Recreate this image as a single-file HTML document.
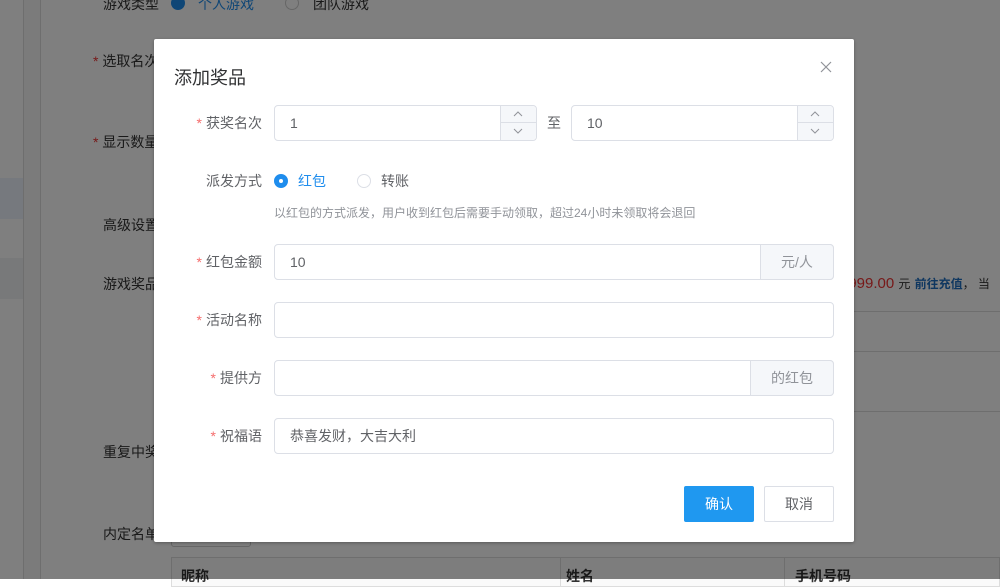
<!DOCTYPE html>
<html><head><meta charset="utf-8"><style>
*{box-sizing:border-box;margin:0;padding:0}
body{width:1000px;height:579px;overflow:hidden;position:relative;background:#fff;font-family:"Liberation Sans","Noto Sans CJK SC",sans-serif;font-size:14px;color:#606266}
.a{position:absolute;white-space:nowrap}
.ov{position:absolute;left:0;top:0;width:1000px;height:579px;background:rgba(0,0,0,.5)}
.m{position:absolute;left:154px;top:39px;width:700px;height:503px;background:#fff;border-radius:2px;box-shadow:0 1px 3px rgba(0,0,0,.3)}
.lb{position:absolute;right:592px;width:120px;text-align:right;font-size:14px;color:#606266;line-height:20px}
.lb i{color:#f56c6c;font-style:normal;margin-right:4px}
.in{position:absolute;border:1px solid #dcdfe6;border-radius:4px;height:36px;background:#fff;line-height:34px;padding-left:15px;color:#606266}
.ap{position:absolute;top:-1px;right:-1px;height:36px;background:#f5f7fa;border:1px solid #dcdfe6;border-radius:0 4px 4px 0;color:#909399;text-align:center;line-height:34px}
.ctl{position:absolute;right:0;top:0;width:36px;height:34px;background:#f5f7fa;border-left:1px solid #dcdfe6;border-radius:0 4px 4px 0}
.ctl div{height:17px;position:relative}
.ctl div:first-child{border-bottom:1px solid #dcdfe6}
.ctl svg{position:absolute;left:12px;top:5px}
.rd{position:absolute;width:14px;height:14px;border-radius:50%;border:1px solid #dcdfe6;background:#fff}
</style></head><body>
<div class="a" style="left:0;top:0;width:24px;height:579px;background:#fff;border-right:1px solid #ddd"></div>
<div class="a" style="left:0;top:178px;width:23px;height:41px;background:#ecf3fd"></div>
<div class="a" style="left:0;top:258px;width:23px;height:41px;background:#f0f2f5"></div>
<div class="a" style="left:24px;top:0;width:17px;height:579px;background:#f7f7f7;border-right:1px solid #ddd"></div>
<div class="a" style="left:103px;top:-6px;color:#333">游戏类型</div>
<div class="a" style="left:171px;top:-4px;width:14px;height:14px;border-radius:50%;background:#1f8ded"></div>
<div class="a" style="left:198px;top:-6px;color:#1f8ded">个人游戏</div>
<div class="a" style="left:285px;top:-4px;width:14px;height:14px;border-radius:50%;border:1px solid #ccc"></div>
<div class="a" style="left:313px;top:-6px;color:#333">团队游戏</div>
<div class="a" style="left:93px;top:51px;color:#333"><span style="color:#e33">*</span> 选取名次</div>
<div class="a" style="left:93px;top:132px;color:#333"><span style="color:#e33">*</span> 显示数量</div>
<div class="a" style="left:103px;top:215px;color:#333">高级设置</div>
<div class="a" style="left:103px;top:274px;color:#333">游戏奖品</div>
<div class="a" style="left:103px;top:442px;color:#333">重复中奖</div>
<div class="a" style="left:103px;top:524px;color:#333">内定名单</div>
<div class="a" style="left:840px;top:275px;font-size:15px;color:#e33">9999.00 <span style="font-size:12px;color:#333">元</span> <span style="font-size:12px;color:#1f6fc0;font-weight:bold">前往充值</span><span style="font-size:12px;color:#333">， 当</span></div>
<div class="a" style="left:854px;top:311px;width:146px;border-top:1px solid #ddd"></div>
<div class="a" style="left:854px;top:351px;width:146px;border-top:1px solid #ddd"></div>
<div class="a" style="left:854px;top:411px;width:146px;border-top:1px solid #ddd"></div>
<div class="a" style="left:171px;top:520px;width:80px;height:27px;border:1px solid #ccc;border-radius:3px"></div>
<div class="a" style="left:171px;top:557px;width:829px;height:30px;border:1px solid #ddd;background:#fafafa"></div>
<div class="a" style="left:784px;top:557px;height:30px;border-left:1px solid #ddd"></div>
<div class="a" style="left:560px;top:557px;height:30px;border-left:1px solid #ddd"></div>
<div class="a" style="left:181px;top:566px;color:#333;font-weight:bold">昵称</div>
<div class="a" style="left:566px;top:566px;color:#333;font-weight:bold">姓名</div>
<div class="a" style="left:795px;top:566px;color:#333;font-weight:bold">手机号码</div>
<div class="ov"></div>
<div class="m">
<div class="a" style="left:20px;top:25px;font-size:18px;color:#303133">添加奖品</div>
<svg class="a" style="left:666px;top:22px" width="12" height="12" viewBox="0 0 12 12"><path d="M1 1L11 11M11 1L1 11" stroke="#909399" stroke-width="1.2"/></svg>
<div class="lb" style="top:74px"><i>*</i>获奖名次</div>
<div class="in" style="left:120px;top:66px;width:263px">1<div class="ctl"><div><svg width="10" height="6"><path d="M1 5L5 1L9 5" fill="none" stroke="#909399"/></svg></div><div><svg width="10" height="6"><path d="M1 1L5 5L9 1" fill="none" stroke="#909399"/></svg></div></div></div>
<div class="a" style="left:393px;top:74px;color:#606266">至</div>
<div class="in" style="left:417px;top:66px;width:263px">10<div class="ctl"><div><svg width="10" height="6"><path d="M1 5L5 1L9 5" fill="none" stroke="#909399"/></svg></div><div><svg width="10" height="6"><path d="M1 1L5 5L9 1" fill="none" stroke="#909399"/></svg></div></div></div>
<div class="lb" style="top:132px">派发方式</div>
<div class="rd" style="left:120px;top:135px;border-color:#1f8ded;background:#1f8ded"><div style="position:absolute;left:4px;top:4px;width:4px;height:4px;border-radius:50%;background:#fff"></div></div>
<div class="a" style="left:144px;top:132px;color:#1f8ded;line-height:20px">红包</div>
<div class="rd" style="left:203px;top:135px"></div>
<div class="a" style="left:227px;top:132px;line-height:20px">转账</div>
<div class="a" style="left:120px;top:165px;font-size:12px;color:#909399">以红包的方式派发，用户收到红包后需要手动领取，超过24小时未领取将会退回</div>
<div class="lb" style="top:213px"><i>*</i>红包金额</div>
<div class="in" style="left:120px;top:205px;width:560px">10<div class="ap" style="width:74px">元/人</div></div>
<div class="lb" style="top:271px"><i>*</i>活动名称</div>
<div class="in" style="left:120px;top:263px;width:560px"></div>
<div class="lb" style="top:329px"><i>*</i>提供方</div>
<div class="in" style="left:120px;top:321px;width:560px"><div class="ap" style="width:84px">的红包</div></div>
<div class="lb" style="top:387px"><i>*</i>祝福语</div>
<div class="in" style="left:120px;top:379px;width:560px">恭喜发财，大吉大利</div>
<div class="a" style="left:530px;top:447px;width:70px;height:36px;background:#1f98f0;border-radius:2px;color:#fff;text-align:center;line-height:36px">确认</div>
<div class="a" style="left:610px;top:447px;width:70px;height:36px;border:1px solid #dcdfe6;border-radius:2px;color:#606266;text-align:center;line-height:34px">取消</div>
</div>
</body></html>
